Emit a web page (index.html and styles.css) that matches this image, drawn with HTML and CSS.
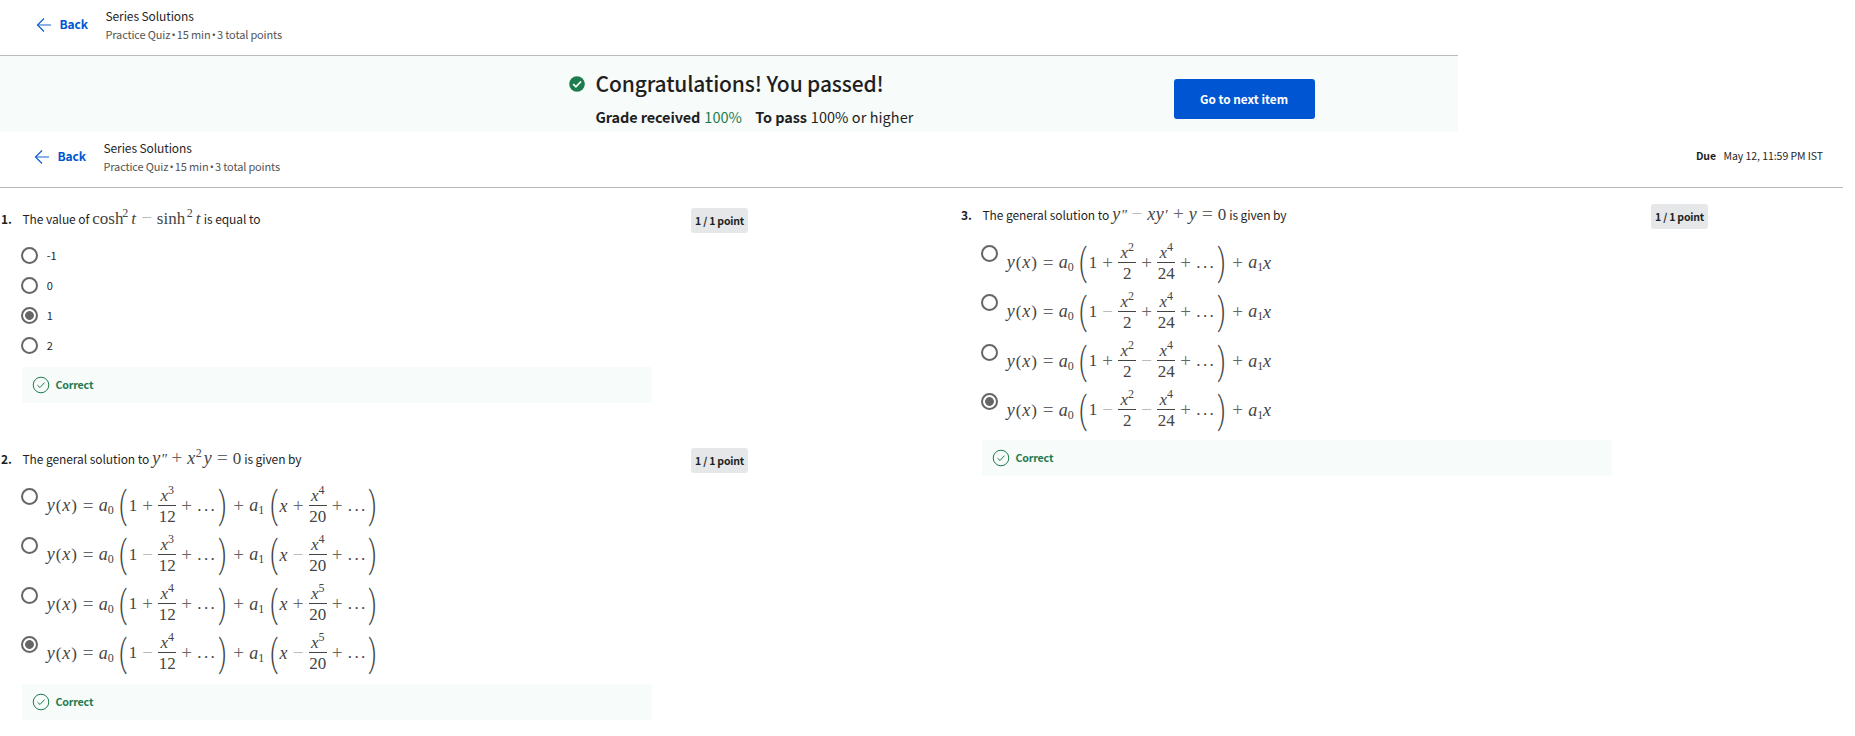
FILE: index.html
```html
<!DOCTYPE html>
<html lang="en">
<head>
<meta charset="utf-8">
<title>Series Solutions</title>
<link rel="stylesheet" href="styles.css">
</head>
<body>
<header class="bar bar-top">
  <svg class="arrow" viewBox="0 0 16 16"><path class="shaft" d="M1.5 8H15"/><path d="M8 1.5L1.5 8L8 14.5"/></svg>
  <b class="back">Back</b>
  <div class="heading"><div class="title">Series Solutions</div><div class="sub">Practice Quiz <span class="dot">•</span> 15 min <span class="dot">•</span> 3 total points</div></div>
</header>
<section class="banner">
  <svg class="passed" viewBox="0 0 16 16"><circle cx="8" cy="8" r="7.8"/><path d="M4.2 8.2L6.9 10.8L12 5.5"/></svg>
  <div class="result">
    <h1>Congratulations! You passed!</h1>
    <p class="grades"><b>Grade received</b><span class="score">100%</span><b class="pass">To pass</b><span class="need">100% or higher</span></p>
  </div>
  <button class="next">Go to next item</button>
</section>
<header class="bar bar-second">
  <svg class="arrow" viewBox="0 0 16 16"><path class="shaft" d="M1.5 8H15"/><path d="M8 1.5L1.5 8L8 14.5"/></svg>
  <b class="back">Back</b>
  <div class="heading"><div class="title">Series Solutions</div><div class="sub">Practice Quiz <span class="dot">•</span> 15 min <span class="dot">•</span> 3 total points</div></div>
  <div class="due"><b>Due</b><span>May 12, 11:59 PM IST</span></div>
</header>
<main class="columns">
  <div class="column">
    <section class="question q1">
      <div class="prompt"><b class="num">1.</b><span class="words">The value of</span><span class="m formula"><span class="fn">cosh</span><sup>2</sup><i class="tt">t</i><span class="op minus">−</span><span class="fn">sinh</span><sup>2</sup><i class="tt">t</i></span><span class="words">is equal to</span><span class="badge">1 / 1 point</span></div>
      <div class="choices simple">
        <label><span class="radio"></span>-1</label>
        <label><span class="radio"></span>0</label>
        <label><span class="radio on"></span>1</label>
        <label><span class="radio"></span>2</label>
      </div>
      <div class="correct"><svg viewBox="0 0 18 18"><circle cx="9" cy="9" r="7.8"/><path d="M5.5 9.2L8 11.5L12.5 6.6"/></svg><b>Correct</b></div>
    </section>
    <section class="question q2">
      <div class="prompt"><b class="num">2.</b><span class="words">The general solution to</span><span class="m formula"><i class="v">y</i><span class="pr">″</span><span class="op">+</span><i class="v">x</i><sup>2</sup><i class="v">y</i><span class="op">=</span><span>0</span></span><span class="words">is given by</span><span class="badge">1 / 1 point</span></div>
      <div class="choices" id="c2"></div>
      <div class="correct"><svg viewBox="0 0 18 18"><circle cx="9" cy="9" r="7.8"/><path d="M5.5 9.2L8 11.5L12.5 6.6"/></svg><b>Correct</b></div>
    </section>
  </div>
  <div class="column">
    <section class="question q3">
      <div class="prompt"><b class="num">3.</b><span class="words">The general solution to</span><span class="m formula"><i class="v">y</i><span class="pr">″</span><span class="op minus">−</span><i class="v">x</i><i class="v">y</i><span class="pr single">′</span><span class="op">+</span><i class="v">y</i><span class="op">=</span><span>0</span></span><span class="words">is given by</span><span class="badge">1 / 1 point</span></div>
      <div class="choices" id="c3"></div>
      <div class="correct"><svg viewBox="0 0 18 18"><circle cx="9" cy="9" r="7.8"/><path d="M5.5 9.2L8 11.5L12.5 6.6"/></svg><b>Correct</b></div>
    </section>
  </div>
</main>
<script src="quiz.js"></script>
</body>
</html>
```
FILE: quiz.js
```js
const op = (s) => `<span class="op${s === '−' ? ' minus' : ''}">${s}</span>`;
const frac = (p, d) => `<span class="frac"><span class="top"><i>x</i><sup>${p}</sup></span><span class="bottom">${d}</span></span>`;
const coef = (n) => `<span class="coef"><i>a</i><sub>${n}</sub></span>`;
const open = '<span class="paren"><span>(</span></span>';
const close = '<span class="paren"><span>)</span></span>';
const dots = '<span class="dots">...</span>';
const lead = '<span class="lhs"><i class="v">y</i>(<i class="v">x</i>)</span><span class="op eq">=</span>' + coef(0) + open + '<span class="one">1</span>';

const choice = (body, on) => `<label><span class="radio${on ? ' on' : ''}"></span><span class="m eqn">${lead}${body}</span></label>`;

document.getElementById('c2').innerHTML = [['+', 3, 4], ['−', 3, 4], ['+', 4, 5], ['−', 4, 5]].map(([s, p, r], i) =>
  choice(op(s) + frac(p, 12) + op('+') + dots + close + op('+') + coef(1) + open + '<i class="var">x</i>' + op(s) + frac(r, 20) + op('+') + dots + close, i === 3)
).join('');

document.getElementById('c3').innerHTML = [['+', '+'], ['−', '+'], ['+', '−'], ['−', '−']].map(([s, r], i) =>
  choice(op(s) + frac(2, 2) + op(r) + frac(4, 24) + op('+') + dots + close + op('+') + '<span class="tight">' + coef(1) + '</span><i class="var">x</i>', i === 3)
).join('');
```
FILE: styles.css
```css
* { box-sizing: border-box; }
body { margin: 0; background: #fff; color: #1f1f1f; font: 12px/18px "Noto Sans CJK SC", "Source Sans Pro", sans-serif; white-space: nowrap; }
b { font-weight: 700; }
.bar { display: flex; height: 56px; border-bottom: 1px solid #bbb; padding: 7px 0 0 36px; }
.bar-top { width: 1458px; }
.bar-second { width: 1843px; padding-left: 34px; }
.arrow { width: 16px; height: 16px; margin-top: 10px; fill: none; stroke: #0056d2; stroke-width: 1.1; }
.arrow .shaft { stroke: #6c9de6; stroke-width: 1.6; }
.back { width: 46px; margin: 8px 0 0 7.5px; color: #0056d2; font-size: 12px; letter-spacing: -.1px; }
.title { color: #1f1f1f; font-size: 12px; font-weight: 400; letter-spacing: -.1px; }
.sub { color: #555; font-size: 11px; letter-spacing: -.16px; }
.dot { margin: 0 -1px; font-family: "Open Sans", sans-serif; }
.due { margin: 8px 20px 0 auto; display: flex; gap: 7.5px; font-size: 10.5px; letter-spacing: -.06px; }
.banner { display: flex; width: 1458px; height: 76px; background: #f7fbfa; }
.passed { width: 16px; height: 16px; margin: 20px 11px 0 568.5px; fill: #1d7c50; }
.passed path { fill: none; stroke: #fff; stroke-width: 1.8; }
.result { width: 578px; }
h1 { margin: 11px 0 0; font-size: 21px; line-height: 32px; font-weight: 500; letter-spacing: -.13px; }
.grades { display: flex; margin: 8px 0 0; font-size: 14.5px; line-height: 20px; }
.grades b { letter-spacing: -.12px; }
.score { margin-left: 4px; color: #1d7c50; }
.pass { margin-left: 13.5px; }
.need { margin-left: 4px; letter-spacing: .06px; }
.next { width: 141px; height: 40px; margin-top: 23px; padding: 0 0 1px; border: 0; border-radius: 3px; background: #0056d2; color: #fff; font: 700 11.8px/18px "Noto Sans CJK SC", sans-serif; }
.columns { display: grid; grid-template-columns: 960px 883px; }
.prompt { display: flex; align-items: center; height: 26px; padding: 0 0 1px 1px; }
.num { width: 21.5px; }
.words { letter-spacing: -.08px; }
.badge { margin: 4px 0 0 auto; width: 57px; height: 25px; border-radius: 3px; background: #e5e7e8; font-weight: 700; font-size: 10.5px; line-height: 25px; letter-spacing: -.2px; text-align: center; }
.question { width: 748px; }
.q1 { padding-top: 18px; }
.q2 { padding-top: 43px; }
.q3 { padding-top: 14px; }
.choices { display: flex; flex-direction: column; padding-left: 21px; height: 196px; }
.choices label { display: flex; flex: none; height: 49.25px; }
.radio { flex: none; width: 17px; height: 17px; margin-right: 8.7px; border: 2px solid #666; border-radius: 50%; }
.radio.on { background: radial-gradient(circle, #666 0 4px, transparent 4.7px); }
.simple { height: 120px; margin-top: 15px; font-size: 11px; line-height: 16px; }
.simple label { height: 30px; }
.q2 .choices { margin-top: 16px; }
.q3 .choices { margin-top: 17px; height: 195px; }
.correct { display: flex; width: 630px; height: 36px; margin-left: 22px; padding: 9px 9.5px; background: #f7fbfa; color: #1d7c50; font-size: 10.7px; line-height: 17px; letter-spacing: -.2px; }
.correct svg { width: 18px; height: 18px; margin-right: 6px; fill: none; stroke: #1d7c50; stroke-width: 1; }
.m { color: #444; font: 17px/20px "Liberation Serif", serif; }
.m sup, .m sub { font-size: 12px; line-height: 1; vertical-align: baseline; position: relative; top: -7px; }
.m sub { top: 3px; }
.op { flex: none; display: inline-block; width: 20.5px; text-align: center; color: #666; font-size: 19px; }
.minus { color: #bbb; }
.formula { display: flex; align-items: baseline; margin: 0 3px; }
.formula .fn { width: 30px; }
.formula sup { width: 8px; }
.formula .tt { width: 6px; padding-left: 1px; }
.formula .v { width: 8.5px; }
.pr { width: 6px; font-size: 15px; font-style: italic; }
.pr.single { width: 4px; }
.v { font-size: 18px; }
.eqn { display: flex; align-items: center; height: 40px; margin-top: -2.5px; }
.lhs { width: 31px; letter-spacing: 1px; }
.coef { width: 19px; }
.coef i { font-size: 18px; }
.tight .coef { display: inline-block; width: 14.5px; }
.one, .var { width: 8.5px; text-align: center; }
.var { font-size: 18px; }
.eqn .op { width: 21px; }
.paren { width: 11px; text-align: center; }
.paren span { display: inline-block; font: 300 17px/20px Roboto, sans-serif; transform: scale(1.5, 2.2); }
.dots { width: 20px; letter-spacing: 2.3px; text-align: center; }
.frac { display: flex; flex-direction: column; width: 18px; height: 40px; text-align: center; }
.top { height: 20px; border-bottom: 1px solid #444; line-height: 20px; }
.bottom { line-height: 22px; }
```
